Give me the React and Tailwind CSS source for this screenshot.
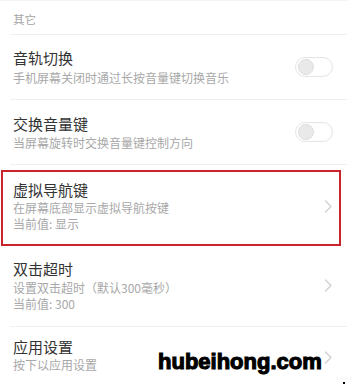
import React from 'react'

const font = { fontFamily: '"Noto Sans CJK SC", "Noto Sans", sans-serif' }

function Toggle() {
  return (
    <div className="relative w-[38px] h-[20px] rounded-full border border-[#e6e6e6] bg-white shadow-[inset_0_0_2px_rgba(0,0,0,0.05)]">
      <div className="absolute left-[2px] top-[1px] w-[16px] h-[16px] rounded-full bg-[#e9e9e9] border border-[#dedede]" />
    </div>
  )
}

function Chevron() {
  return (
    <svg width="9" height="13" viewBox="0 0 9 13" fill="none">
      <path d="M1.5 1 L7 6.5 L1.5 12" stroke="#cfcfcf" strokeWidth="1.3" strokeLinecap="round" strokeLinejoin="round" />
    </svg>
  )
}

function Divider() {
  return <div className="ml-[10px] h-px bg-[#efefef]" />
}

export default function App() {
  return (
    <div className="relative w-[347px] h-[386px] overflow-hidden bg-white" style={font}>
      <div className="h-px bg-[#f3f3f3]" />
      {/* section header */}
      <div className="h-[33px] pl-[13px] pt-[10px] text-[11.5px] leading-[16px] text-[#a5a5a5]">其它</div>
      <Divider />

      {/* 音轨切换 */}
      <div className="h-[64px] flex items-center pl-[13px] pr-[14px]">
        <div className="flex-1">
          <div className="text-[15px] leading-[20px] text-[#333]">音轨切换</div>
          <div className="mt-[2px] text-[12px] leading-[16px] text-[#a8a8a8]">手机屏幕关闭时通过长按音量键切换音乐</div>
        </div>
        <Toggle />
      </div>
      <Divider />

      {/* 交换音量键 */}
      <div className="h-[64px] flex items-center pl-[13px] pr-[14px]">
        <div className="flex-1">
          <div className="text-[15px] leading-[20px] text-[#333]">交换音量键</div>
          <div className="mt-[1px] text-[12px] leading-[16px] text-[#a8a8a8]">当屏幕旋转时交换音量键控制方向</div>
        </div>
        <Toggle />
      </div>
      <Divider />

      {/* 虚拟导航键 (highlighted) */}
      <div className="pt-[5px] pl-[1px] pr-[6px]">
        <div className="border-2 border-[#c9242c] flex items-center pl-[10px] pr-[6px] pt-[8px] pb-[12px]">
          <div className="flex-1">
            <div className="text-[15px] leading-[20px] text-[#333]">虚拟导航键</div>
            <div className="text-[12px] leading-[16px] text-[#a8a8a8]">在屏幕底部显示虚拟导航按键</div>
            <div className="text-[12px] leading-[16px] text-[#a8a8a8]">当前值: 显示</div>
          </div>
          <Chevron />
        </div>
      </div>

      {/* 双击超时 */}
      <div className="flex items-center pl-[13px] pr-[14px] pt-[13px] pb-[14px]">
        <div className="flex-1">
          <div className="text-[15px] leading-[20px] text-[#333]">双击超时</div>
          <div className="mt-[1px] text-[12px] leading-[16px] text-[#a8a8a8]">设置双击超时（默认300毫秒）</div>
          <div className="text-[12px] leading-[16px] text-[#a8a8a8]">当前值: 300</div>
        </div>
        <Chevron />
      </div>
      <Divider />

      {/* 应用设置 */}
      <div className="h-[60px] flex items-center pl-[13px] pr-[14px]">
        <div className="flex-1 -mt-[4px]">
          <div className="text-[15px] leading-[20px] text-[#333]">应用设置</div>
          <div className="text-[12px] leading-[16px] text-[#a8a8a8]">按下以应用设置</div>
        </div>
        <Chevron />
      </div>

      {/* watermark */}
      <div
        className="absolute left-[158px] top-[347px] text-[22px] leading-[30px] font-bold text-black [-webkit-text-stroke:1.1px_black]"
        style={{ fontFamily: '"Liberation Sans", Arial, sans-serif' }}
      >
        hubeihong.com
      </div>
      <div className="absolute left-[343px] top-[382px] w-[2px] h-[2px] bg-black" />
    </div>
  )
}
